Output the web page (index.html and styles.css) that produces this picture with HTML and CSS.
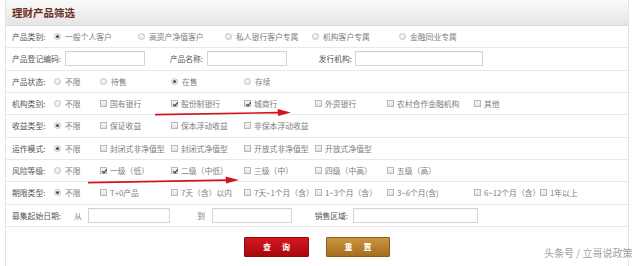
FILE: index.html
```html
<!DOCTYPE html>
<html lang="zh-CN">
<head>
<meta charset="utf-8">
<title>理财产品筛选</title>
<link rel="stylesheet" href="styles.css">
</head>
<body>
<div class="panel">
  <div class="head">理财产品筛选</div>

  <div class="row">
    <span class="lbl">产品类别:</span>
    <div class="opts wide">
      <span class="opt"><i class="rd on"></i>一般个人客户</span>
      <span class="opt"><i class="rd"></i>高资产净值客户</span>
      <span class="opt"><i class="rd"></i>私人银行客户专属</span>
      <span class="opt"><i class="rd"></i>机构客户专属</span>
      <span class="opt"><i class="rd"></i>金融同业专属</span>
    </div>
  </div>

  <div class="row">
    <span class="flbl f1">产品登记编码:</span>
    <span class="inp w80"></span>
    <span class="flbl f2">产品名称:</span>
    <span class="inp w80"></span>
    <span class="flbl f3">发行机构:</span>
    <span class="inp w128"></span>
  </div>

  <div class="row">
    <span class="lbl">产品状态:</span>
    <div class="opts">
      <span class="opt"><i class="rd"></i>不限</span>
      <span class="opt"><i class="rd"></i>待售</span>
      <span class="opt"><i class="rd on"></i>在售</span>
      <span class="opt"><i class="rd"></i>存续</span>
    </div>
  </div>

  <div class="row">
    <span class="lbl">机构类别:</span>
    <div class="opts">
      <span class="opt"><i class="rd"></i>不限</span>
      <span class="opt"><i class="cb"></i>国有银行</span>
      <span class="opt"><i class="cb on"></i>股份制银行</span>
      <span class="opt"><i class="cb on"></i>城商行</span>
      <span class="opt"><i class="cb"></i>外资银行</span>
      <span class="opt"><i class="cb"></i>农村合作金融机构</span>
      <span class="opt"><i class="cb"></i>其他</span>
    </div>
  </div>

  <div class="row">
    <span class="lbl">收益类型:</span>
    <div class="opts">
      <span class="opt"><i class="rd on"></i>不限</span>
      <span class="opt"><i class="cb"></i>保证收益</span>
      <span class="opt"><i class="cb"></i>保本浮动收益</span>
      <span class="opt"><i class="cb"></i>非保本浮动收益</span>
    </div>
  </div>

  <div class="row">
    <span class="lbl">运作模式:</span>
    <div class="opts">
      <span class="opt"><i class="rd on"></i>不限</span>
      <span class="opt"><i class="cb"></i>封闭式非净值型</span>
      <span class="opt"><i class="cb"></i>封闭式净值型</span>
      <span class="opt"><i class="cb"></i>开放式非净值型</span>
      <span class="opt"><i class="cb"></i>开放式净值型</span>
    </div>
  </div>

  <div class="row">
    <span class="lbl">风险等级:</span>
    <div class="opts">
      <span class="opt"><i class="rd"></i>不限</span>
      <span class="opt"><i class="cb on"></i>一级（低）</span>
      <span class="opt"><i class="cb on"></i>二级（中低）</span>
      <span class="opt"><i class="cb"></i>三级（中）</span>
      <span class="opt"><i class="cb"></i>四级（中高）</span>
      <span class="opt"><i class="cb"></i>五级（高）</span>
    </div>
  </div>

  <div class="row">
    <span class="lbl">期限类型:</span>
    <div class="opts">
      <span class="opt"><i class="rd on"></i>不限</span>
      <span class="opt"><i class="cb"></i>T+0产品</span>
      <span class="opt"><i class="cb"></i>7天（含）以内</span>
      <span class="opt"><i class="cb"></i>7天~1个月（含）</span>
      <span class="opt"><i class="cb"></i>1~3个月（含）</span>
      <span class="opt"><i class="cb"></i>3~6个月(含)</span>
      <span class="opt"><i class="cb"></i>6~12个月（含）</span>
      <span class="opt"><i class="cb"></i>1年以上</span>
    </div>
  </div>

  <div class="row">
    <span class="flbl d1">募集起始日期:</span>
    <span class="flbl d2">从</span>
    <span class="inp w82"></span>
    <span class="flbl d3">到</span>
    <span class="inp w80"></span>
    <span class="flbl d4">销售区域:</span>
    <span class="inp w125"></span>
  </div>

  <div class="btns">
    <span class="btn q"><span class="bt">查询</span></span>
    <span class="btn r"><span class="bt">重置</span></span>
  </div>
</div>

<svg class="arrows" width="640" height="266" viewBox="0 0 640 266">
  <path d="M155 114.6 L280 112.6" stroke="#d3161d" stroke-width="1.7" fill="none"/>
  <path d="M291 112.4 L277.5 108.9 L278.2 116.1 Z" fill="#d3161d"/>
  <path d="M88 182.6 L228 180.2" stroke="#d3161d" stroke-width="1.7" fill="none"/>
  <path d="M239 179.9 L225.5 176.6 L226.1 183.6 Z" fill="#d3161d"/>
</svg>

<div class="wm">头条号 / 立哥说政策</div>
</body>
</html>
```

FILE: styles.css
```css
* {
  box-sizing: border-box;
  margin: 0;
  padding: 0;
}

body {
  width: 640px;
  height: 266px;
  overflow: hidden;
  position: relative;
  background: #fff;
  font-family: "Noto Sans CJK SC", "Noto Sans", sans-serif;
  font-size: 7.8px;
  color: #7c7c7c;
}

.panel {
  margin-left: 5px;
  width: 624px;
  height: 266px;
  border-left: 1px solid #e3e3e3;
  border-right: 1px solid #e3e3e3;
}

.head {
  height: 26px;
  border-bottom: 1px solid #dcdcdc;
  background: linear-gradient(#fafafa, #e5e5e5);
  padding-left: 6px;
  display: flex;
  align-items: center;
  font-size: 10.5px;
  font-weight: bold;
  color: #6b2f1f;
}

.row {
  height: 22.33px;
  border-bottom: 1px solid #e8e8e8;
  display: flex;
  align-items: center;
  padding-left: 6px;
}

.lbl {
  width: 42px;
  flex: none;
  color: #555;
  white-space: nowrap;
}

.opts {
  display: grid;
  grid-template-columns: 46px 71px 73px 71px 72px 87px 66px auto;
  align-items: center;
}

.opts.wide {
  grid-template-columns: 84px 87px 87px 87px auto;
}

.opt {
  display: flex;
  align-items: center;
  white-space: nowrap;
}

.rd {
  width: 7px;
  height: 7px;
  border-radius: 50%;
  border: 1px solid #c2c2c2;
  background: radial-gradient(circle at 40% 35%, #fbfbfb, #e2e2e2);
  margin-right: 4px;
  flex: none;
  position: relative;
}

.rd.on::after {
  content: "";
  position: absolute;
  left: 1px;
  top: 1px;
  width: 3px;
  height: 3px;
  border-radius: 50%;
  background: #4a4a4a;
}

.cb {
  width: 7px;
  height: 7px;
  border: 1px solid #b8b8b8;
  background: linear-gradient(#f6f6f6, #e2e2e2);
  margin-right: 3px;
  flex: none;
  position: relative;
}

.cb.on::after {
  content: "";
  position: absolute;
  left: 1.5px;
  top: -0.5px;
  width: 2px;
  height: 4px;
  border-right: 1.3px solid #333;
  border-bottom: 1.3px solid #333;
  transform: rotate(40deg);
}

.flbl {
  flex: none;
  color: #555;
  white-space: nowrap;
}

.f1 { width: 53px; }
.f2 { width: 62px; text-align: right; padding-right: 4px; }
.f3 { width: 68px; text-align: right; padding-right: 3px; }

.d1 { width: 62px; }
.d2 { width: 14px; color: #808080; }
.d3 { width: 42px; text-align: right; padding-right: 7px; color: #808080; }
.d4 { width: 61px; text-align: right; padding-right: 5px; }

.inp {
  flex: none;
  height: 15px;
  border: 1px solid #d4d4d4;
  background: #fff;
  box-shadow: inset 0 1px 1px rgba(0, 0, 0, 0.04);
}

.w80 { width: 80px; }
.w82 { width: 82px; }
.w125 { width: 125px; }
.w128 { width: 128px; }

.btns {
  display: flex;
  justify-content: center;
  gap: 17px;
  margin-top: 10px;
}

.btn {
  width: 65px;
  height: 20px;
  display: flex;
  align-items: center;
  justify-content: center;
  color: #fff;
  font-weight: bold;
  font-size: 8px;
  border-radius: 1px;
}

.btn.q {
  background: linear-gradient(#d6171f, #a8070e);
  border: 1px solid #8c0a0a;
}

.btn.r {
  width: 64px;
  background: linear-gradient(#cb953d, #a56d1f);
  border: 1px solid #8d5c18;
}

.bt {
  letter-spacing: 11px;
  margin-right: -11px;
}

.arrows {
  position: absolute;
  left: 0;
  top: 0;
  pointer-events: none;
}

.wm {
  position: absolute;
  left: 544px;
  top: 245px;
  font-size: 10px;
  color: #a0a0a0;
  white-space: nowrap;
  text-shadow: 0 0 1px #fff, 0 0 1px #fff;
}
```
